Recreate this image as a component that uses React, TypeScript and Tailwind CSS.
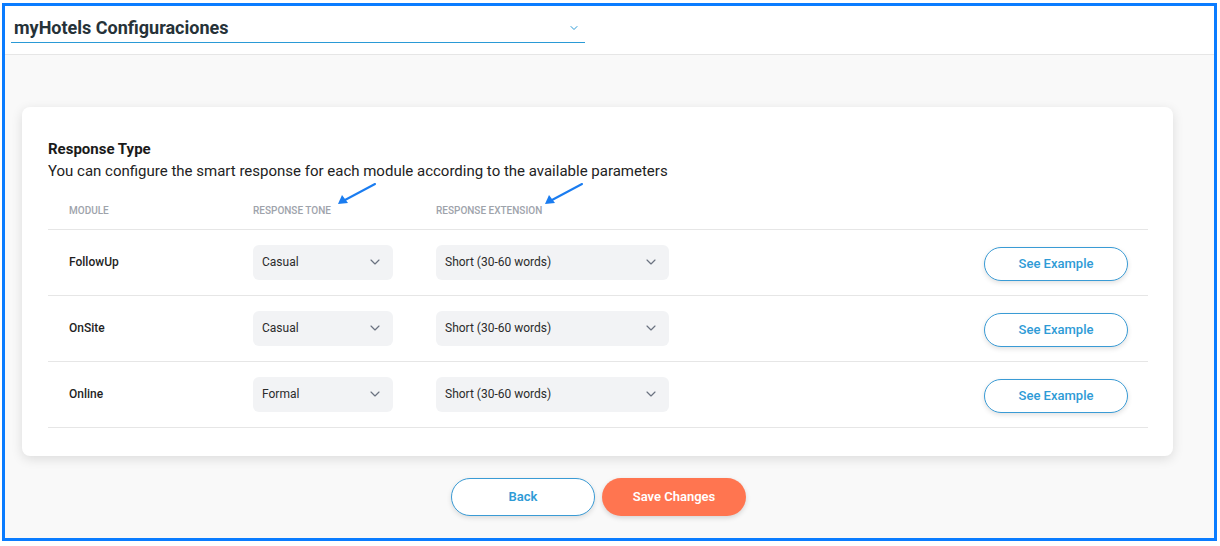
import { ChevronDown } from "lucide-react";

const rows = [
  { module: "FollowUp", tone: "Casual", ext: "Short (30-60 words)" },
  { module: "OnSite", tone: "Casual", ext: "Short (30-60 words)" },
  { module: "Online", tone: "Formal", ext: "Short (30-60 words)" },
];

function SelectBox({ value, width }: { value: string; width: string }) {
  return (
    <div
      className={`flex h-[35px] items-center justify-between rounded-md bg-[#f2f3f5] pl-[9px] pr-[10px] text-[12px] text-[#2b2b2b] ${width}`}
    >
      <span>{value}</span>
      <ChevronDown className="h-4 w-4 text-[#6b7280]" strokeWidth={1.75} />
    </div>
  );
}

function Arrow({ className }: { className: string }) {
  return (
    <svg className={`absolute ${className}`} width="40" height="22" viewBox="0 0 40 22">
      <line x1="38" y1="1" x2="8" y2="17" stroke="#1a7cf0" strokeWidth="2" strokeLinecap="round" />
      <polygon points="1,21 5,12 11,20" fill="#1a7cf0" />
    </svg>
  );
}

export default function App() {
  return (
    <div className="h-[546px] w-[1220px] bg-white pl-[2px] pt-[3px] font-['Roboto',sans-serif]">
      <div className="flex h-[538px] w-[1215px] flex-col border-[3px] border-[#0a7cff]">
        <header className="h-[49px] shrink-0 border-b border-[#e6e6e6] bg-white pl-[6px] pt-[6px]">
          <div className="flex h-[31px] w-[574px] items-center justify-between border-b border-[#2a9ad6] pl-[3px] pr-[5px]">
            <span className="text-[18px] font-bold text-[#263238]">myHotels Configuraciones</span>
            <ChevronDown className="mt-[2px] h-3 w-3 text-[#2a9ad6]" strokeWidth={2} />
          </div>
        </header>

        <main className="flex-1 bg-[#f9f9f9] pl-[17px] pt-[52px]">
          <div className="relative h-[349px] w-[1151px] rounded-lg bg-white pl-[26px] pr-[25px] pt-[32px] shadow-[0_3px_12px_rgba(0,0,0,0.12)]">
            <h2 className="text-[15px] font-bold leading-5 text-[#1a1a1a]">Response Type</h2>
            <p className="text-[15px] leading-[24px] text-[#222]">
              You can configure the smart response for each module according to the available parameters
            </p>

            <Arrow className="left-[315px] top-[76px]" />
            <Arrow className="left-[522px] top-[76px]" />

            <div className="flex h-[47px] items-end border-b border-[#e6e6e6] pb-[12px] pl-[21px] text-[10px] font-medium uppercase leading-3 text-[#9ea3ab]">
              <span className="w-[184px]">Module</span>
              <span className="w-[183px]">Response Tone</span>
              <span>Response Extension</span>
            </div>

            {rows.map((r) => (
              <div
                key={r.module}
                className="flex h-[66px] items-center border-b border-[#e6e6e6] pb-[1px] pl-[21px] pr-[20px]"
              >
                <span className="w-[184px] text-[12px] font-medium text-[#1f1f1f]">{r.module}</span>
                <div className="w-[183px]">
                  <SelectBox value={r.tone} width="w-[140px]" />
                </div>
                <SelectBox value={r.ext} width="w-[233px]" />
                <button className="ml-auto mt-[3px] h-[34px] w-[144px] rounded-full border border-[#3a9bd5] bg-white text-[13px] font-medium text-[#2e9bd6] shadow-[0_2px_5px_rgba(0,0,0,0.12)]">
                  See Example
                </button>
              </div>
            ))}
          </div>

          <div className="mt-[22px] flex w-[1151px] justify-center gap-[7px] pl-[2px]">
            <button className="h-[38px] w-[144px] rounded-full border border-[#3a9bd5] bg-white text-[13px] font-semibold text-[#2e9bd6] shadow-[0_2px_5px_rgba(0,0,0,0.12)]">
              Back
            </button>
            <button className="h-[38px] w-[144px] rounded-full bg-[#ff7550] text-[13px] font-semibold text-white shadow-[0_2px_5px_rgba(0,0,0,0.15)]">
              Save Changes
            </button>
          </div>
        </main>
      </div>
    </div>
  );
}
